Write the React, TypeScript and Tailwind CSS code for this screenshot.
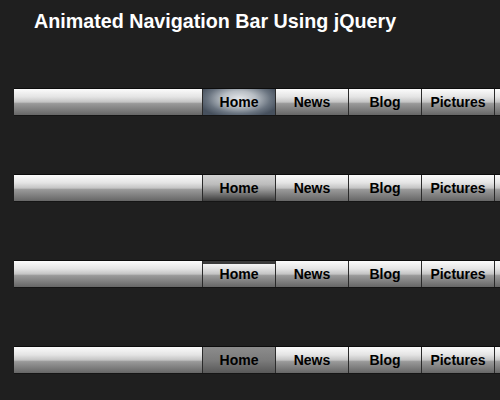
import React from "react";

const items = ["Home", "News", "Blog", "Pictures"];

const gloss =
  "bg-[linear-gradient(to_bottom,#fbfbfb_0%,#e4e4e4_30%,#c4c4c4_50%,#9a9a9a_56%,#666666_100%)]";

// one active look for "Home" per bar
const activeStyles = [
  "bg-[radial-gradient(ellipse_58%_75%_at_50%_38%,#e4e7ea_0%,#b8bec4_40%,#6a7480_75%,#46505d_100%)]",
  "bg-[linear-gradient(to_bottom,#d2d2d2_0%,#bdbdbd_35%,#9a9a9a_55%,#3c3c3c_100%)]",
  "bg-[linear-gradient(to_bottom,#3a3a3a_0px,#3a3a3a_3px,#f4f4f4_3px,#e0e0e0_30%,#c4c4c4_50%,#9a9a9a_56%,#666666_100%)]",
  "bg-[linear-gradient(to_bottom,#8c8c8c_0%,#7c7c7c_50%,#6a6a6a_75%,#585858_100%)]",
];

function NavBar({ variant }: { variant: number }) {
  return (
    <div className="ml-[14px] flex h-[28px] w-[600px] border-t border-b border-t-[#0c0c0c] border-b-[#151515]">
      <div className={`w-[188px] ${gloss}`} />
      {items.map((label, i) => (
        <a
          key={label}
          href="#"
          className={`flex w-[73px] items-center justify-center border-l border-[#2a2a2a] text-[14px] font-bold text-black ${
            i === 0 ? activeStyles[variant] : gloss
          }`}
        >
          {label}
        </a>
      ))}
      <div className={`flex-1 border-l border-[#2a2a2a] ${gloss}`} />
    </div>
  );
}

export default function App() {
  return (
    <div
      className="h-[400px] w-[500px] overflow-hidden bg-[#1f1f1f]"
      style={{ fontFamily: '"Liberation Sans", Arial, sans-serif' }}
    >
      <h1 className="pl-[34px] pt-[9px] text-[19.7px] font-bold leading-[24px] text-white">
        Animated Navigation Bar Using jQuery
      </h1>
      <div className="mt-[55px] flex flex-col gap-[58px]">
        {[0, 1, 2, 3].map((v) => (
          <NavBar key={v} variant={v} />
        ))}
      </div>
    </div>
  );
}
